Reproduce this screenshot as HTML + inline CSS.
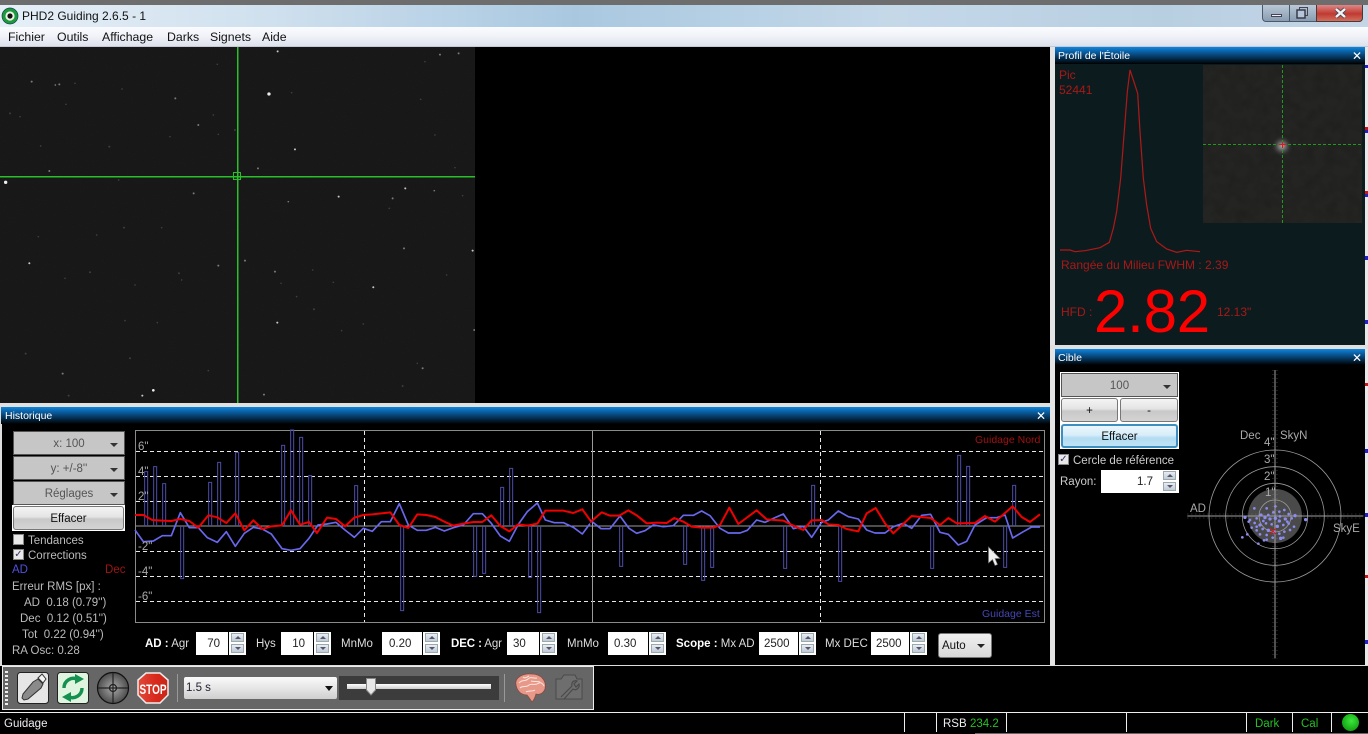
<!DOCTYPE html>
<html><head><meta charset="utf-8"><title>PHD2 Guiding</title>
<style>
html,body{margin:0;padding:0;background:#000;width:1368px;height:734px;overflow:hidden}
body{position:relative;font-family:"Liberation Sans",sans-serif;font-size:11.5px;color:#ccc}
div,span,svg{position:absolute}
.t{white-space:nowrap;line-height:14px}
.tb{background:linear-gradient(#0f86dc 0,#0a5c9e 30%,#03223c 75%,#000 100%);color:#fff;font-size:10.5px;line-height:18px;box-sizing:border-box;padding-left:3px}
.x{position:absolute;right:3px;top:0;font-size:12px;color:#fff}
.dd{background:#c6c6c6;color:#555;text-align:center;border:1px solid #555;box-sizing:border-box;line-height:24px;font-size:11.5px}
.dd i{position:absolute;right:6px;top:11px;width:0;height:0;border:4px solid transparent;border-top:4px solid #333;border-bottom:0}
.btn{background:linear-gradient(#f4f4f4,#e4e4e4 45%,#c8c8c8 55%,#d4d4d4);color:#111;text-align:center;border:1px solid #777;border-radius:3px;box-sizing:border-box;font-size:11.5px}
.in{background:#fff;color:#222;text-align:right;box-sizing:border-box;padding-right:8px;line-height:25px;height:23px;font-size:11.5px}
.sp{width:17px;height:23px;background:#fff}
.sp b,.sp u{position:absolute;left:2px;width:13px;height:9px;background:linear-gradient(#e8edf5,#c2cad8);border:1px solid #9aa;box-sizing:border-box}
.sp b{top:1px}.sp u{top:12px}
.sp b:after,.sp u:after{content:"";position:absolute;left:3px;top:2px;border:3px solid transparent}
.sp b:after{border-bottom:3px solid #556;border-top:0}
.sp u:after{border-top:3px solid #556;border-bottom:0}
.cb{width:11px;height:11px;background:#e8e8e8;border:1px solid #888;box-sizing:border-box;color:#336;font-size:10px;line-height:9px;text-align:center}
.w{color:#fff;font-weight:bold}
.lab{font-size:11.5px;color:#ddd}
.gl{color:#aaa;font-size:11.5px}
</style></head><body>

<!-- window chrome -->
<div style="left:0;top:0;width:1368px;height:5px;background:#6d6d6d"></div>
<div style="left:0;top:5px;width:1368px;height:22px;background:linear-gradient(90deg,#e6eff7 0,#cfe0ee 20%,#a9c8e0 42%,#c4d8e8 65%,#b8cfe2 85%,#c4d6e6 100%)"></div>
<svg style="left:1px;top:7px" width="18" height="18" viewBox="0 0 18 18"><circle cx="9" cy="9" r="8" fill="#1d9a3a" stroke="#145" stroke-width=".7"/><circle cx="9" cy="9" r="4.6" fill="#eef2e8"/><circle cx="9" cy="9" r="2.6" fill="#111"/></svg>
<div class="t" style="left:22px;top:9px;color:#111;font-size:12px">PHD2 Guiding 2.6.5 - 1</div>
<div style="left:1262px;top:5px;width:101px;height:17px;border:1px solid #4a5a6a;border-top:0;border-radius:0 0 4px 4px;box-sizing:border-box;background:linear-gradient(#b8c8d8,#8a9cb0)"></div>
<div style="left:1316px;top:5px;width:47px;height:17px;border-radius:0 0 4px 0;background:linear-gradient(#d88,#c03a30 55%,#d07060);border:1px solid #4a3a3a;border-top:0;box-sizing:border-box"></div>
<div style="left:1289px;top:5px;width:1px;height:17px;background:#4a5a6a"></div>
<div style="left:1271px;top:14px;width:11px;height:3px;background:#eef;border:1px solid #445;box-sizing:border-box"></div>
<svg style="left:1296px;top:7px" width="13" height="12" viewBox="0 0 13 12"><rect x="3.5" y=".5" width="8" height="8" fill="none" stroke="#445" stroke-width="1"/><rect x="1" y="3" width="8" height="8" fill="#b5c6d8" stroke="#334" stroke-width="1.4"/></svg>
<svg style="left:1334px;top:7px" width="13" height="12" viewBox="0 0 13 12"><path d="M2 2 L11 10 M11 2 L2 10" stroke="#445" stroke-width="4"/><path d="M2 2 L11 10 M11 2 L2 10" stroke="#f4f4f4" stroke-width="2.4"/></svg>

<div style="left:0;top:27px;width:1368px;height:19px;background:linear-gradient(#fbfcfe,#f0f2f8 50%,#dde2ec)"></div>
<div style="left:0;top:46px;width:1368px;height:1px;background:#c5c9d5"></div>
<div class="t" style="left:8px;top:30px;color:#111;font-size:12.3px">Fichier</div>
<div class="t" style="left:57px;top:30px;color:#111;font-size:12.3px">Outils</div>
<div class="t" style="left:102px;top:30px;color:#111;font-size:12.3px">Affichage</div>
<div class="t" style="left:167px;top:30px;color:#111;font-size:12.3px">Darks</div>
<div class="t" style="left:210px;top:30px;color:#111;font-size:12.3px">Signets</div>
<div class="t" style="left:262px;top:30px;color:#111;font-size:12.3px">Aide</div>

<!-- star image -->
<svg style="left:0;top:47px" width="475" height="356" viewBox="0 0 475 356">
<defs><filter id="n" x="0" y="0" width="100%" height="100%" color-interpolation-filters="sRGB"><feTurbulence type="fractalNoise" baseFrequency="1.1" numOctaves="1" seed="3"/><feColorMatrix values="0 0 0 0 .2  0 0 0 0 .2  0 0 0 0 .2  .5 0 0 0 -.14"/></filter></defs>
<rect width="475" height="356" fill="#171717"/>
<rect width="475" height="356" filter="url(#n)" opacity=".5"/>
<g transform="translate(0 -2) scale(.3333)" fill="#fff">
<g fill="#eee"><circle cx="807" cy="147" r="5"/><circle cx="17" cy="412" r="5"/><circle cx="460" cy="1036" r="4"/></g>
<g fill="#c8c8c8"><circle cx="832" cy="833" r="3"/><circle cx="1418" cy="617" r="3"/><circle cx="427" cy="1052" r="3"/><circle cx="88" cy="655" r="3"/><circle cx="833" cy="19" r="3"/><circle cx="885" cy="313" r="3"/><circle cx="1120" cy="727" r="3"/><circle cx="1216" cy="430" r="3"/><circle cx="1016" cy="455" r="3"/></g>
<g fill="#7a7a7a"><circle cx="774" cy="370" r="3"/><circle cx="1320" cy="29" r="3"/><circle cx="1376" cy="25" r="3"/><circle cx="95" cy="110" r="3"/><circle cx="178" cy="118" r="3"/><circle cx="166" cy="120" r="2.5"/><circle cx="526" cy="160" r="3"/><circle cx="595" cy="240" r="3"/><circle cx="148" cy="378" r="3"/><circle cx="581" cy="445" r="3"/><circle cx="865" cy="470" r="2.5"/><circle cx="1178" cy="460" r="3"/><circle cx="1303" cy="437" r="2.5"/><circle cx="1212" cy="610" r="3"/><circle cx="735" cy="647" r="3"/><circle cx="655" cy="662" r="3"/><circle cx="825" cy="680" r="3"/><circle cx="792" cy="1049" r="3"/><circle cx="1268" cy="970" r="3"/><circle cx="188" cy="986" r="3"/><circle cx="1423" cy="855" r="3"/></g>
<g fill="#3e3e3e"><circle cx="77" cy="926" r="3"/><circle cx="206" cy="1052" r="3"/><circle cx="1208" cy="1023" r="3"/><circle cx="372" cy="548" r="3"/><circle cx="270" cy="682" r="3"/><circle cx="30" cy="205" r="3"/><circle cx="328" cy="305" r="3"/><circle cx="122" cy="303" r="2.5"/><circle cx="510" cy="275" r="2.5"/><circle cx="198" cy="178" r="2.5"/><circle cx="225" cy="115" r="2.5"/><circle cx="366" cy="132" r="2.5"/><circle cx="652" cy="58" r="2.5"/><circle cx="1275" cy="50" r="2.5"/><circle cx="1262" cy="163" r="2.5"/><circle cx="875" cy="143" r="2.5"/><circle cx="942" cy="793" r="3"/><circle cx="938" cy="675" r="2.5"/><circle cx="890" cy="755" r="2.5"/><circle cx="537" cy="685" r="3"/><circle cx="545" cy="705" r="2.5"/><circle cx="405" cy="720" r="2.5"/><circle cx="195" cy="700" r="2.5"/><circle cx="115" cy="575" r="2.5"/><circle cx="390" cy="940" r="3"/><circle cx="375" cy="827" r="2.5"/><circle cx="472" cy="833" r="2.5"/><circle cx="625" cy="977" r="2.5"/><circle cx="1025" cy="857" r="2.5"/><circle cx="1252" cy="955" r="2.5"/><circle cx="1090" cy="837" r="2.5"/><circle cx="1168" cy="490" r="2.5"/><circle cx="1388" cy="452" r="2.5"/><circle cx="356" cy="405" r="2.5"/><circle cx="485" cy="548" r="2.5"/><circle cx="290" cy="570" r="2.5"/><circle cx="60" cy="215" r="2.5"/><circle cx="705" cy="255" r="3"/><circle cx="640" cy="210" r="2.5"/><circle cx="655" cy="268" r="2.5"/><circle cx="1305" cy="270" r="2.5"/><circle cx="1365" cy="368" r="2.5"/><circle cx="1340" cy="690" r="2.5"/><circle cx="1000" cy="712" r="2.5"/><circle cx="843" cy="715" r="2.5"/></g>
</g>
<rect x="237" y="0" width="1.5" height="356" fill="#28c028"/>
<rect x="0" y="129" width="475" height="1.5" fill="#28c028"/>
<rect x="233.500" y="125.500" width="7" height="7" fill="none" stroke="#28c028"/>
</svg>

<!-- right strip & gutters -->
<div style="left:1050px;top:47px;width:5px;height:618px;background:#e4e4e4"></div>
<div style="left:1365px;top:47px;width:3px;height:618px;background:#e8e8e8"></div>
<div style="left:1365px;top:65px;width:3px;height:3px;background:#2222cc"></div>
<div style="left:1365px;top:127px;width:3px;height:3px;background:#d01515"></div>
<div style="left:1365px;top:130px;width:3px;height:3px;background:#2222cc"></div>
<div style="left:1365px;top:191px;width:3px;height:3px;background:#d01515"></div>
<div style="left:1365px;top:194px;width:3px;height:3px;background:#2222cc"></div>
<div style="left:1365px;top:256px;width:3px;height:4px;background:#2222cc"></div>
<div style="left:1365px;top:320px;width:3px;height:4px;background:#2222cc"></div>
<div style="left:1365px;top:383px;width:3px;height:3px;background:#d01515"></div>
<div style="left:1365px;top:449px;width:3px;height:4px;background:#2222cc"></div>
<div style="left:1365px;top:513px;width:3px;height:4px;background:#2222cc"></div>
<div style="left:1365px;top:575px;width:3px;height:3px;background:#d01515"></div>
<div style="left:1365px;top:640px;width:3px;height:4px;background:#2222cc"></div>

<!-- Profil -->
<div class="tb" style="left:1055px;top:47px;width:310px;height:17px">Profil de l'Étoile<span class="x">✕</span></div>
<div style="left:1055px;top:64px;width:310px;height:281px;background:#0c1c1e"></div>
<svg style="left:1203px;top:65px" width="159" height="158" viewBox="0 0 159 158">
<defs><radialGradient id="g"><stop offset="0" stop-color="#aaa"/><stop offset=".45" stop-color="#555"/><stop offset="1" stop-color="#222" stop-opacity="0"/></radialGradient>
<filter id="m" x="0" y="0" width="100%" height="100%" color-interpolation-filters="sRGB"><feTurbulence type="fractalNoise" baseFrequency=".09" numOctaves="2" seed="7"/><feColorMatrix values="0 0 0 0 .09  0 0 0 0 .09  0 0 0 0 .085  1.2 0 0 0 -.45"/></filter></defs>
<rect width="159" height="158" fill="#242422"/>
<rect width="159" height="158" filter="url(#m)" opacity=".6"/>
<circle cx="79" cy="81" r="11" fill="url(#g)"/>
<path d="M79.500 0V158M0 79.500H159" stroke="#1c9a1c" stroke-width="1" stroke-dasharray="3 2" fill="none"/>
<path d="M79.500 77V83M76 79.500H83" stroke="#e01818" stroke-width="1" fill="none"/>
</svg>
<svg style="left:1050px;top:45px" width="160" height="215" viewBox="0 0 480 645"><path d="M30 615L60 615 75 620 105 617 150 608 178 592 190 550 200 500 212 400 222 270 232 140 240 75 250 105 263 145 270 260 280 400 290 480 302 550 320 590 350 612 380 622 410 616 450 620" fill="none" stroke="#b01818" stroke-width="3.600"/></svg>
<div class="t" style="left:1059px;top:68px;color:#a81818;font-size:12px">Pic</div>
<div class="t" style="left:1059px;top:83px;color:#a81818;font-size:12px">52441</div>
<div class="t" style="left:1061px;top:258px;color:#a81818;font-size:12px">Rangée du Milieu FWHM : 2.39</div>
<div class="t" style="left:1061px;top:305px;color:#a81818;font-size:12px">HFD :</div>
<div class="t" style="left:1094px;top:282px;color:#ff0000;font-size:60px;line-height:60px;letter-spacing:-.2px">2.82</div>
<div class="t" style="left:1217px;top:305px;color:#a81818;font-size:12px">12.13"</div>

<!-- separators -->
<div style="left:1050px;top:345px;width:318px;height:4px;background:#e0e0e0"></div>

<!-- Cible -->
<div class="tb" style="left:1055px;top:349px;width:310px;height:16px">Cible<span class="x">✕</span></div>
<div style="left:1060px;top:372px;width:119px;height:77px;background:#fff"></div>
<div class="dd" style="left:1061px;top:373px;width:117px;height:24px">100<i></i></div>
<div class="btn" style="left:1061px;top:398px;width:57px;height:24px;line-height:24px">+</div>
<div class="btn" style="left:1120px;top:398px;width:58px;height:24px;line-height:24px">-</div>
<div class="btn" style="left:1061px;top:424px;width:117px;height:24px;line-height:22px;background:linear-gradient(#eaf6fd,#d8eef9 45%,#b2dcf2 60%,#c0e3f5);border:2px solid #3c8fbf">Effacer</div>
<div class="cb" style="left:1058px;top:454px">✓</div>
<div class="t" style="left:1073px;top:454px;color:#ccc">Cercle de référence</div>
<div class="t" style="left:1060px;top:475px;color:#ccc">Rayon:</div>
<div class="in" style="left:1101px;top:470px;width:60px">1.7</div>
<div class="sp" style="left:1161px;top:470px;height:23px;width:18px"><b></b><u></u></div>

<svg style="left:1050px;top:345px" width="315" height="320" viewBox="0 0 945 960">
<circle cx="675" cy="513" r="81" fill="#4a4a4a"/>
<g fill="none" stroke="#9a9a9a" stroke-width="2.400"><circle cx="675" cy="513" r="48"/><circle cx="675" cy="513" r="98"/><circle cx="675" cy="513" r="148"/><circle cx="675" cy="513" r="198"/></g>
<path d="M675 75V940M412 513H940" stroke="#a0a0a0" stroke-width="3"/>
<path d="M669 75V940M681 75V940M412 507H940M412 519H940" stroke="#888" stroke-width="3" stroke-dasharray="3 9" fill="none" opacity=".45"/>
<g fill="#8c8cf0">
<circle cx="585" cy="517" r="5"/><circle cx="767" cy="524" r="5"/><circle cx="577" cy="577" r="4"/><circle cx="592" cy="568" r="4"/><circle cx="625" cy="596" r="4"/><circle cx="642" cy="586" r="4"/><circle cx="613" cy="490" r="4"/><circle cx="650" cy="490" r="4"/><circle cx="676" cy="484" r="4"/><circle cx="670" cy="502" r="4"/><circle cx="688" cy="500" r="4"/><circle cx="703" cy="495" r="4"/><circle cx="716" cy="507" r="4"/><circle cx="735" cy="512" r="5"/><circle cx="725" cy="520" r="4"/><circle cx="706" cy="522" r="5"/><circle cx="688" cy="528" r="5"/><circle cx="676" cy="520" r="5"/><circle cx="660" cy="522" r="5"/><circle cx="645" cy="518" r="5"/><circle cx="633" cy="510" r="5"/><circle cx="620" cy="520" r="4"/><circle cx="600" cy="525" r="4"/><circle cx="614" cy="534" r="4"/><circle cx="630" cy="540" r="5"/><circle cx="648" cy="535" r="4"/><circle cx="665" cy="538" r="4"/><circle cx="682" cy="544" r="5"/><circle cx="700" cy="540" r="4"/><circle cx="716" cy="536" r="4"/><circle cx="732" cy="545" r="4"/><circle cx="720" cy="555" r="4"/><circle cx="703" cy="560" r="4"/><circle cx="688" cy="566" r="4"/><circle cx="672" cy="560" r="5"/><circle cx="655" cy="556" r="5"/><circle cx="638" cy="552" r="4"/><circle cx="620" cy="556" r="4"/><circle cx="605" cy="548" r="4"/><circle cx="630" cy="568" r="4"/><circle cx="650" cy="570" r="4"/><circle cx="668" cy="578" r="4"/><circle cx="692" cy="580" r="5"/><circle cx="700" cy="578" r="4"/><circle cx="650" cy="584" r="4"/><circle cx="596" cy="530" r="4"/><circle cx="640" cy="528" r="4"/><circle cx="655" cy="510" r="4"/><circle cx="690" cy="514" r="4"/><circle cx="712" cy="530" r="4"/><circle cx="620" cy="545" r="4"/>
</g>
<path d="M660 550L678 568M678 550L660 568" stroke="#e01818" stroke-width="3"/>
</svg>
<div class="t gl" style="left:1240px;top:429px">Dec</div>
<div class="t gl" style="left:1280px;top:429px">SkyN</div>
<div class="t gl" style="left:1264px;top:436px">4"</div>
<div class="t gl" style="left:1264px;top:453px">3"</div>
<div class="t gl" style="left:1264px;top:470px">2"</div>
<div class="t gl" style="left:1265px;top:486px">1"</div>
<div class="t gl" style="left:1190px;top:502px">AD</div>
<div class="t gl" style="left:1333px;top:522px">SkyE</div>

<!-- Historique -->
<div style="left:0;top:403px;width:1050px;height:4px;background:#e0e0e0"></div>
<div style="left:0;top:407px;width:2px;height:258px;background:#ddd"></div>
<div class="tb" style="left:1px;top:407px;width:1049px;height:17px;padding-left:4px">Historique<span class="x" style="right:4px">✕</span></div>
<div class="dd" style="left:13px;top:431px;width:112px;height:24px">x: 100<i></i></div>
<div class="dd" style="left:13px;top:456px;width:112px;height:24px">y: +/-8''<i></i></div>
<div class="dd" style="left:13px;top:481px;width:112px;height:24px">Réglages<i></i></div>
<div style="left:12px;top:505px;width:113px;height:26px;background:#fff"></div>
<div class="btn" style="left:13px;top:506px;width:111px;height:24px;line-height:24px">Effacer</div>
<div class="cb" style="left:13px;top:534px"></div>
<div class="t" style="left:28px;top:534px;color:#bbb">Tendances</div>
<div class="cb" style="left:13px;top:549px">✓</div>
<div class="t" style="left:28px;top:549px;color:#bbb">Corrections</div>
<div class="t" style="left:12px;top:563px;color:#5050e0">AD</div>
<div class="t" style="left:105px;top:563px;color:#a01414">Dec</div>
<div class="t" style="left:12px;top:580px;color:#bbb">Erreur RMS [px] :</div>
<div class="t" style="left:24px;top:596px;color:#bbb">AD&nbsp; 0.18 (0.79'')</div>
<div class="t" style="left:20px;top:612px;color:#bbb">Dec&nbsp; 0.12 (0.51'')</div>
<div class="t" style="left:22px;top:628px;color:#bbb">Tot&nbsp; 0.22 (0.94'')</div>
<div class="t" style="left:12px;top:644px;color:#bbb">RA Osc: 0.28</div>

<!-- graph -->
<svg style="left:0;top:0" width="1368" height="734" viewBox="0 0 1368 734">
<rect x="135.500" y="430.500" width="909" height="192" fill="#000" stroke="#8a8a8a"/>
<g stroke="#e8e8e8" stroke-dasharray="4 3" fill="none">
<path d="M136 451.500H1044M136 476.500H1044M136 501.500H1044M136 551.500H1044M136 576.500H1044M136 601.500H1044"/>
<path d="M364.500 431V622M820.500 431V622"/>
</g>
<path d="M136 526H1044" stroke="#9a9a9a" stroke-width="1" fill="none"/>
<path d="M592.500 431V622" stroke="#9a9a9a" fill="none"/>
<g transform="translate(130 425) scale(.33333)" fill="none">
<g stroke="#4c4ca8" stroke-width="3">
<path d="M44 303V140H53V303M71 303V125H80V303M98 303V176H107V303M236 303V172H245V303M263 303V112H272V303M317 303V82H326V303M455 303V61H464V303M482 303V15H491V303M509 303V37H518V303M536 303V152H545V303M674 303V182H683V303M1112 303V187H1121V303M1139 303V130H1148V303"/>
<path d="M152 303V461H161V303M812 303V557H821V303M1031 303V454H1040V303M1058 303V445H1067V303M1196 303V457H1205V303M1223 303V563H1232V303"/>
</g>
<polyline stroke="#6868ee" stroke-width="5" stroke-linejoin="round" points="15,315 40,350 70,348 97,332 124,332 151,263 178,308 205,308 232,338 262,352 289,320 316,364 343,325 370,307 397,312 424,327 456,371 483,376 510,371 537,340 564,300 591,297 618,292 645,315 673,337 700,310 727,319 754,290 781,290 808,236 835,300 862,316 889,316 916,307 943,318 970,308 1000,300 1030,266 1057,266 1084,295 1111,333 1138,349 1165,298 1192,260 1222,234 1246,285 1273,293 1300,293 1330,307 1357,327 1380,296"/>
<polyline stroke="#f00000" stroke-width="6" stroke-linejoin="round" points="15,270 40,270 67,285 97,287 124,288 151,282 178,288 205,308 235,271 262,277 289,294 316,265 343,316 370,286 397,312 424,304 456,301 483,256 510,299 537,291 561,324 591,278 618,282 645,304 673,278 700,270 727,268 754,265 781,262 808,300 835,309 862,268 889,270 916,276 943,290 970,302 1000,296 1030,291 1057,291 1084,271 1111,303 1138,319 1165,298 1192,302 1222,296 1246,257 1273,257 1300,257 1330,264 1357,253 1380,285"/>
</g>
<g transform="translate(590 425) scale(.33333)" fill="none">
<g stroke="#4c4ca8" stroke-width="3">
<path d="M665 303V181H674V303M1103 303V91H1112V303M1130 303V124H1139V303M1268 303V181H1277V303"/>
<path d="M89 303V424H98V303M281 303V418H290V303M335 303V466H344V303M362 303V427H371V303M581 303V430H590V303M746 303V469H755V303M1022 303V430H1031V303M1241 303V427H1250V303"/>
</g>
<polyline stroke="#6868ee" stroke-width="5" stroke-linejoin="round" points="0,285 33,311 60,311 90,273 117,310 140,325 165,317 190,300 220,305 250,302 280,271 310,271 335,258 360,272 390,310 415,324 450,324 472,316 500,285 525,292 555,278 580,267 610,311 640,304 665,337 695,292 715,285 745,258 775,275 805,282 830,315 855,324 885,324 910,305 940,295 965,310 995,271 1022,268 1050,322 1075,328 1105,360 1130,349 1155,300 1190,278 1220,278 1245,270 1268,339 1300,320 1325,306 1350,306"/>
<polyline stroke="#f00000" stroke-width="6" stroke-linejoin="round" points="0,292 35,262 60,272 88,272 115,256 140,271 170,295 200,293 230,294 253,279 280,290 305,305 335,308 370,308 390,300 418,248 445,297 500,256 530,283 580,287 610,302 640,315 665,286 695,285 715,298 745,300 770,312 805,319 830,265 857,249 885,295 910,325 965,273 1022,279 1050,300 1075,279 1100,295 1155,294 1185,273 1215,290 1268,244 1295,276 1320,291 1350,268"/>
</g>
<path d="M988.500 547V563L992.500 559.500 995 565.500 997.500 564.500 995 558.500 1000 558.500Z" fill="#eee" stroke="#777" stroke-width=".6"/>
</svg>
<div class="t gl" style="left:138px;top:440px">6"</div>
<div class="t gl" style="left:138px;top:465px">4"</div>
<div class="t gl" style="left:138px;top:490px">2"</div>
<div class="t gl" style="left:138px;top:540px">-2"</div>
<div class="t gl" style="left:138px;top:565px">-4"</div>
<div class="t gl" style="left:138px;top:590px">-6"</div>
<div class="t" style="left:975px;top:433px;color:#a01010;font-size:10.5px">Guidage Nord</div>
<div class="t" style="left:982px;top:607px;color:#4646b4;font-size:10.5px">Guidage Est</div>

<!-- params -->
<div class="t lab" style="left:145px;top:637px"><span style="position:static" class="w">AD :</span> Agr</div>
<div class="in" style="left:196px;top:632px;width:32px">70</div><div class="sp" style="left:229px;top:632px"><b></b><u></u></div>
<div class="t lab" style="left:256px;top:637px">Hys</div>
<div class="in" style="left:281px;top:632px;width:32px">10</div><div class="sp" style="left:314px;top:632px"><b></b><u></u></div>
<div class="t lab" style="left:341px;top:637px">MnMo</div>
<div class="in" style="left:382px;top:632px;width:40px;text-align:left;padding-left:7px;padding-right:0">0.20</div><div class="sp" style="left:423px;top:632px"><b></b><u></u></div>
<div class="t lab" style="left:451px;top:637px;letter-spacing:-.1px"><span style="position:static" class="w">DEC :</span> Agr</div>
<div class="in" style="left:507px;top:632px;width:32px;text-align:left;padding-left:6px;padding-right:0">30</div><div class="sp" style="left:540px;top:632px"><b></b><u></u></div>
<div class="t lab" style="left:567px;top:637px">MnMo</div>
<div class="in" style="left:608px;top:632px;width:40px;text-align:left;padding-left:6px;padding-right:0">0.30</div><div class="sp" style="left:649px;top:632px"><b></b><u></u></div>
<div class="t lab" style="left:676px;top:637px"><span style="position:static" class="w">Scope :</span> Mx AD</div>
<div class="in" style="left:759px;top:632px;width:39px;text-align:left;padding-left:5px;padding-right:0">2500</div><div class="sp" style="left:799px;top:632px"><b></b><u></u></div>
<div class="t lab" style="left:825px;top:637px">Mx DEC</div>
<div class="in" style="left:871px;top:632px;width:38px;text-align:left;padding-left:5px;padding-right:0">2500</div><div class="sp" style="left:910px;top:632px"><b></b><u></u></div>
<div class="btn" style="left:938px;top:633px;width:54px;height:25px;text-align:left;padding-left:3px;line-height:24px;border-radius:3px;background:linear-gradient(#f0f0f0,#d8d8d8)">Auto<i style="position:absolute;right:6px;top:10px;width:0;height:0;border:4px solid transparent;border-top:4px solid #222;border-bottom:0"></i></div>

<div style="left:0;top:665px;width:1368px;height:1px;background:#ddd"></div>

<!-- toolbar -->
<div style="left:2px;top:666px;width:592px;height:44px;background:#666;border:1px solid #eee;box-sizing:border-box"></div>
<div style="left:5px;top:671px;width:3px;height:34px;background:repeating-linear-gradient(#eee 0,#eee 2px,transparent 2px,transparent 4px)"></div>
<svg style="left:0;top:664px" width="600" height="48" viewBox="0 0 600 48">
<rect x="17.500" y="8.500" width="31" height="31" rx="3" fill="#e6e6e6" stroke="#222"/>
<path d="M22 34L23 30 33 18 38 15 43 20 41 24 28 35 24 36Z" fill="#8a8a8a" stroke="#333" stroke-width="1"/>
<path d="M38 14L42 10 46 15 43 19Z" fill="#f4f4f4" stroke="#333" stroke-width="1"/>
<rect x="57.500" y="8.500" width="31" height="31" rx="3" fill="#dff5df" stroke="#222"/>
<path d="M64 24A9.500 9.500 0 0 1 78 15.500M82 24A9.500 9.500 0 0 1 68 32.500" fill="none" stroke="#149050" stroke-width="3.400"/>
<path d="M75 10L84 15 75 20ZM71 28L62 33 71 38Z" fill="#149050"/>
<defs><radialGradient id="ts" cx=".5" cy=".5" r=".6"><stop offset="0" stop-color="#aaa"/><stop offset="1" stop-color="#3a3a3a"/></radialGradient><linearGradient id="st" x1="0" x2="1" y1="0" y2="0"><stop offset="0" stop-color="#e04a3a"/><stop offset=".6" stop-color="#d8281c"/><stop offset="1" stop-color="#c82818"/></linearGradient></defs>
<circle cx="113" cy="24" r="15.500" fill="url(#ts)" stroke="#111" stroke-width="1.200"/>
<path d="M113 9V39M98 24H128" stroke="#222" stroke-width="1.200"/>
<circle cx="113" cy="24" r="3.500" fill="none" stroke="#222" stroke-width="1.300"/>
<path d="M146 9H160L168 16V31L160 39H146L138 31V16Z" fill="url(#st)" stroke="#eee" stroke-width="1.500"/>
<text x="153" y="30" text-anchor="middle" font-family="Liberation Sans" font-weight="bold" font-size="14" textLength="27" lengthAdjust="spacingAndGlyphs" fill="#fff">STOP</text>
<path d="M177.500 10V38M504.500 10V38" stroke="#999"/>
<path d="M516 21C514 13 524 9 532 10 541 10 547 17 545 25 543 30 539 31 536 30 535 34 533 37 532 38 530 35 528 32 527 31 521 31 517 27 516 21Z" fill="#e89888" stroke="#8a4a40" stroke-width=".8"/>
<path d="M519 19C522 15 525 18 528 15 531 12 534 15 537 14M520 24C523 21 526 24 529 21 532 19 535 22 539 19 541 18 543 20 544 22M526 28C529 26 532 28 535 26M531 17C534 18 537 17 540 18M523 13C525 15 527 13 529 12" fill="none" stroke="#fbe6de" stroke-width="1"/>
<path d="M556 15H561L564 11H575L577 15H582V35H556Z" fill="#6e6e6e" stroke="#4a4a4a" stroke-width="1"/>
<path d="M561 33L572 22C571 18 574 16 577 17L574 20 576 23 579 20C580 24 576 27 573 25L564 35" fill="none" stroke="#4a4a4a" stroke-width="1.200"/>
</svg>
<div style="left:184px;top:677px;width:153px;height:22px;background:linear-gradient(#fafafa,#e6e6e6 50%,#cfcfcf);border-radius:2px"></div>
<div class="t" style="left:186px;top:681px;color:#223;font-size:11.500px">1.5 s</div>
<div style="left:325px;top:686px;width:0;height:0;border:4px solid transparent;border-top:5px solid #111;border-bottom:0"></div>
<div style="left:339px;top:676px;width:160px;height:24px;background:#3c3c3c"></div>
<div style="left:347px;top:684px;width:144px;height:5px;background:linear-gradient(#fff,#ccc)"></div>
<svg style="left:365px;top:677px" width="12" height="20" viewBox="0 0 12 20"><path d="M1.500 1.500H10.500V13L6 18 1.500 13Z" fill="#e8e8e8" stroke="#888"/></svg>

<!-- status -->
<div style="left:0;top:712px;width:1368px;height:1px;background:#eee"></div>
<div style="left:904px;top:713px;width:1px;height:19px;background:#eee"></div>
<div style="left:936px;top:713px;width:1px;height:19px;background:#eee"></div>
<div style="left:1006px;top:713px;width:1px;height:19px;background:#eee"></div>
<div style="left:1126px;top:713px;width:1px;height:19px;background:#eee"></div>
<div style="left:1246px;top:713px;width:1px;height:19px;background:#eee"></div>
<div style="left:1292px;top:713px;width:1px;height:19px;background:#eee"></div>
<div style="left:1331px;top:713px;width:1px;height:19px;background:#eee"></div>
<div style="left:975px;top:733px;width:393px;height:1px;background:#666"></div>
<div class="t" style="left:4px;top:717px;color:#eee">Guidage</div>
<div class="t" style="left:943px;top:717px;color:#eee">RSB</div>
<div class="t" style="left:970px;top:717px;color:#24c024">234.2</div>
<div class="t" style="left:1255px;top:717px;color:#24c024">Dark</div>
<div class="t" style="left:1301px;top:717px;color:#24c024">Cal</div>
<div style="left:1342px;top:714px;width:17px;height:17px;border-radius:50%;background:radial-gradient(circle at 55% 40%,#3ce83c,#12a012 75%,#0a700a)"></div>
</body></html>
